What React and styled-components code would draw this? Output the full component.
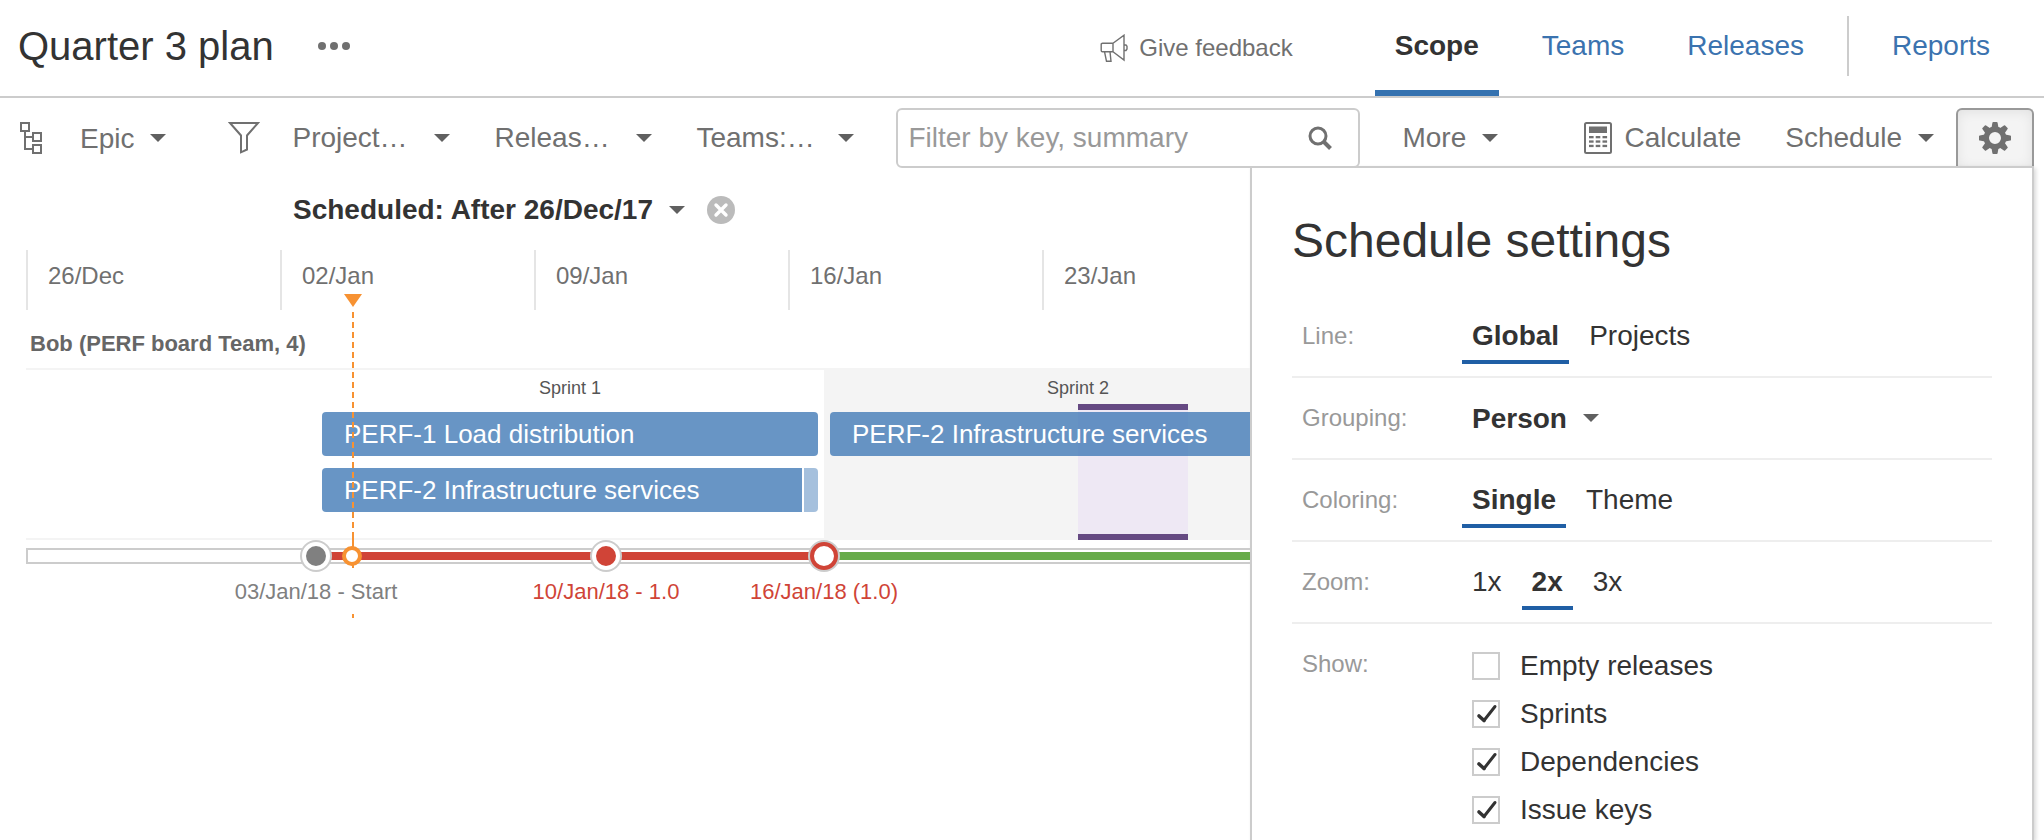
import React from "react";
import styled, { createGlobalStyle, css } from 'styled-components'


const GlobalStyle = createGlobalStyle`
    * {
        box-sizing: border-box;
    }
    body {
        margin: 0;
        background: #fff;
        color: #333;
        font-family: "Liberation Sans", Arial, sans-serif;
    }
    button, input, select {
        margin: 0;
        padding: 0;
        border: 0;
        background: none;
        color: inherit;
        font: inherit;
    }
`

const tabs = [
    { name: 'Scope', active: true },
    { name: 'Teams' },
    { name: 'Releases' },
]

const filters = ['Project…', 'Releas…', 'Teams:…']

const weeks = ['26/Dec', '02/Jan', '09/Jan', '16/Jan', '23/Jan']

// offsets and widths are in timeline pixels, counted from 26/Dec
const sprints = [
    { name: 'Sprint 1', start: 290, width: 508 },
    { name: 'Sprint 2', start: 798, width: 508, shaded: true },
]

const rows = [
    [
        { text: 'PERF-1 Load distribution', start: 296, width: 496 },
        { text: 'PERF-2 Infrastructure services', start: 804, width: 496 },
    ],
    [
        { text: 'PERF-2 Infrastructure services', start: 296, width: 480, continued: true },
        { text: '', start: 778, width: 14, tail: true },
    ],
]

const timeOff = { start: 1052, width: 110 }

const today = 326

const milestones = [
    { label: '03/Jan/18 - Start', at: 290, kind: 'start' },
    { label: '10/Jan/18 - 1.0', at: 580, kind: 'due' },
    { label: '16/Jan/18 (1.0)', at: 798, kind: 'release' },
]

const checks = [
    { name: 'Empty releases', checked: false },
    { name: 'Sprints', checked: true },
    { name: 'Dependencies', checked: true },
    { name: 'Issue keys', checked: true },
]


const TreeIcon = () => (
    <svg width="22" height="32" viewBox="0 0 22 32" fill="none" stroke="#707070" strokeWidth="2">
        <path d="M1 1h8v8H1zM13 11h8v8h-8zM13 23h8v8h-8zM5 9v18h8M5 15h8" />
    </svg>
)

const FunnelIcon = () => (
    <svg width="32" height="32" viewBox="0 0 32 32" fill="none" stroke="#707070" strokeWidth="2">
        <path d="M2 1H30L19 13.500V27.500L13 30.300V13.500Z" />
    </svg>
)

const MegaphoneIcon = () => (
    <svg width="28" height="28" viewBox="0 0 28 28" fill="none" stroke="#707070" strokeWidth="1.4">
        <path d="M13 9.300H2.500Q1.200 9.300 1.200 10.500V16.500Q1.200 17.700 2.500 17.700H13ZM13 9.300L24 1.200V26L13 17.700M4.500 17.700L6.500 27.300H11L10 17.700M24 11H26L27 12.300V15L26 16.500H24" />
    </svg>
)

const SearchIcon = () => (
    <svg width="24" height="24" viewBox="0 0 24 24" fill="none" stroke="#707070" strokeWidth="3">
        <circle cx="10" cy="10" r="8" />
        <path d="M15.500 15.500L22.500 22.500" strokeWidth="4" />
    </svg>
)

const CalculatorIcon = () => (
    <svg width="28" height="32" viewBox="0 0 28 32" fill="#707070">
        <rect x="1" y="1" width="26" height="30" rx="1.5" fill="none" stroke="#707070" strokeWidth="2" />
        <rect x="5" y="4.500" width="18" height="6.500" />
        {[14, 18.4, 22.8].map(y => [5, 11.7, 18.5].map(x => (
            <rect key={`${x}-${y}`} x={x} y={y} width="4.600" height="2.300" />
        )))}
    </svg>
)

const GearIcon = () => (
    <svg width="32" height="32" viewBox="0 0 32 32" fill="#707070">
        <circle cx="16" cy="16" r="8.7" fill="none" stroke="#707070" strokeWidth="5.4" />
        {[0, 45, 90, 135, 180, 225, 270, 315].map(angle => (
            <path key={angle} d="M12.300 7L13.400 0.800Q13.500 0 14.300 0H17.700Q18.500 0 18.600 0.800L19.700 7Z"
                transform={`rotate(${angle} 16 16)`} />
        ))}
    </svg>
)

const ClearIcon = () => (
    <svg width="28" height="28" viewBox="0 0 28 28">
        <circle cx="14" cy="14" r="14" fill="#bbb" />
        <path d="M9 9L19 19M19 9L9 19" stroke="#fff" strokeWidth="3.400" strokeLinecap="round" />
    </svg>
)

const TickIcon = () => (
    <svg width="28" height="28" viewBox="0 0 28 28" fill="none" stroke="#333" strokeLinecap="round">
        <path d="M7 16L12 20.500" strokeWidth="3.600" />
        <path d="M12 20.500L23 6.500" strokeWidth="3" />
    </svg>
)


const Header = () => (
    <StyledHeader>
        <Title>Quarter 3 plan</Title>
        <DotsButton aria-label="More plan actions">
            <Dot /><Dot /><Dot />
        </DotsButton>
        <Feedback href="#feedback">
            <MegaphoneIcon />
            Give feedback
        </Feedback>
        <Tabs>
            {tabs.map(({ name, active }) => (
                <Tab key={name} href={`#${name}`} $active={active}>{name}</Tab>
            ))}
            <TabDivider />
            <Tab href="#Reports">Reports</Tab>
        </Tabs>
    </StyledHeader>
)

const Toolbar = () => (
    <StyledToolbar>
        <HierarchyPicker>
            <TreeIcon />
            <SelectWrap>
                <StyledSelect aria-label="Hierarchy level" defaultValue="Epic">
                    <option>Epic</option>
                </StyledSelect>
                <Caret />
            </SelectWrap>
        </HierarchyPicker>
        <Filters>
            <FunnelIcon />
            {filters.map(name => (
                <FilterButton key={name} aria-haspopup="true">
                    {name}
                    <Caret />
                </FilterButton>
            ))}
        </Filters>
        <Search>
            <SearchInput type="text" placeholder="Filter by key, summary" aria-label="Filter by key, summary" />
            <SearchIcon />
        </Search>
        <MenuButton aria-haspopup="true">More <Caret /></MenuButton>
        <Actions>
            <CalculateButton><CalculatorIcon />Calculate</CalculateButton>
            <MenuButton aria-haspopup="true">Schedule <Caret /></MenuButton>
        </Actions>
        <GearButton aria-label="Schedule settings" aria-pressed="true">
            <GearIcon />
        </GearButton>
    </StyledToolbar>
)

const Timeline = () => (
    <StyledTimeline>
        <Axis>
            {weeks.map(week => <Week key={week}>{week}</Week>)}
        </Axis>
        <LaneTitle>Bob (PERF board Team, 4)</LaneTitle>
        <Lane>
            {sprints.map(({ name, start, width, shaded }) => (
                <Sprint key={name} $shaded={shaded} style={{ left: start, width }}>{name}</Sprint>
            ))}
            <TimeOff style={{ left: timeOff.start, width: timeOff.width }} />
            {rows.map((bars, i) => (
                <BarRow key={i}>
                    {bars.map(({ text, start, width, continued, tail }) => (
                        <Bar key={start} $continued={continued} $tail={tail}
                            style={{ left: start, width }}>
                            {text}
                        </Bar>
                    ))}
                </BarRow>
            ))}
        </Lane>
        <TodayLine style={{ left: today }} />
        <Track>
            <Segment style={{ width: milestones[0].at - 4 }} />
            <Segment $color="#d04437" style={{ width: milestones[2].at - milestones[0].at }} />
            <Segment $color="#67ab49" $grow />
            {milestones.map(({ at, kind }) => (
                <Milestone key={at} $kind={kind} style={{ left: at - 2 }} />
            ))}
            <TodayRing style={{ left: today - 2 }} />
        </Track>
        <MilestoneLabels>
            {milestones.map(({ label, at, kind }) => (
                <MilestoneLabel key={at} $kind={kind} style={{ left: at }}>{label}</MilestoneLabel>
            ))}
        </MilestoneLabels>
    </StyledTimeline>
)

const Options = ({ label, options, selected }) => (
    <Setting>
        <SettingLabel>{label}</SettingLabel>
        <OptionGroup role="group" aria-label={label}>
            {options.map(option => (
                <Option key={option} aria-pressed={option === selected} $active={option === selected}>
                    {option}
                </Option>
            ))}
        </OptionGroup>
    </Setting>
)

const SettingsPanel = () => (
    <Panel>
        <PanelTitle>Schedule settings</PanelTitle>
        <Options label="Line:" options={['Global', 'Projects']} selected="Global" />
        <Setting>
            <SettingLabel as="label" htmlFor="grouping">Grouping:</SettingLabel>
            <GroupingWrap>
                <StyledSelect id="grouping" $bold defaultValue="Person">
                    <option>Person</option>
                </StyledSelect>
                <Caret />
            </GroupingWrap>
        </Setting>
        <Options label="Coloring:" options={['Single', 'Theme']} selected="Single" />
        <Options label="Zoom:" options={['1x', '2x', '3x']} selected="2x" />
        <Setting $last>
            <SettingLabel>Show:</SettingLabel>
            <CheckList>
                {checks.map(({ name, checked }) => (
                    <CheckLabel key={name}>
                        <CheckBox>
                            <CheckInput type="checkbox" defaultChecked={checked} />
                            <TickIcon />
                        </CheckBox>
                        {name}
                    </CheckLabel>
                ))}
            </CheckList>
        </Setting>
    </Panel>
)

const App = () => (
    <Page>
        <GlobalStyle />
        <Header />
        <Toolbar />
        <Main>
            <Schedule>
                <ScheduledFilter>
                    <ScheduledButton aria-haspopup="true">
                        Scheduled: After 26/Dec/17
                        <Caret />
                    </ScheduledButton>
                    <ClearButton aria-label="Remove filter"><ClearIcon /></ClearButton>
                </ScheduledFilter>
                <Timeline />
            </Schedule>
            <SettingsPanel />
        </Main>
    </Page>
)

export default App


const Page = styled.div`
    display: flex;
    flex-direction: column;
    height: 100vh;
    overflow: hidden;
`

const Row = styled.div`
    display: flex;
    align-items: center;
`

const Caret = styled.span`
    flex: none;
    border: 8px solid transparent;
    border-top-color: #606060;
    border-bottom: 0;
    pointer-events: none;
`

const StyledHeader = styled.header`
    display: flex;
    flex: none;
    height: 98px;
    padding: 0 34px 0 18px;
    border-bottom: 2px solid #ccc;
`

const Title = styled.h1`
    margin: 0;
    font-size: 40px;
    font-weight: 400;
    line-height: 92px;
    white-space: nowrap;
`

const DotsButton = styled.button`
    display: flex;
    align-items: center;
    gap: 4px;
    height: 92px;
    margin-left: 44px;
`

const Dot = styled.span`
    width: 8px;
    height: 8px;
    border-radius: 50%;
    background: #707070;
`

const Feedback = styled.a`
    display: flex;
    align-items: center;
    gap: 11px;
    height: 96px;
    margin-left: auto;
    color: #707070;
    font-size: 24px;
    text-decoration: none;
    white-space: nowrap;
`

const Tabs = styled.nav`
    display: flex;
    gap: 23px;
    margin-left: 82px;
`

const Tab = styled.a`
    height: 96px;
    padding: 2px 20px 0;
    border-bottom: 6px solid ${props => props.$active ? '#3572b0' : 'transparent'};
    color: ${props => props.$active ? '#333' : '#3b73af'};
    font-size: 28px;
    font-weight: ${props => props.$active ? 700 : 400};
    line-height: 88px;
    text-decoration: none;
`

const TabDivider = styled.span`
    width: 2px;
    height: 60px;
    margin-top: 16px;
    background: #ccc;
`

const StyledToolbar = styled.div`
    display: flex;
    flex: none;
    height: 68px;
    padding: 10px 10px 0 20px;
    color: #707070;
    font-size: 28px;
`

const HierarchyPicker = styled(Row)`
    gap: 38px;
    height: 60px;
`

const SelectWrap = styled(Row)`
    gap: 16px;
`

const StyledSelect = styled.select`
    appearance: none;
    field-sizing: content;
    outline: none;
    font-weight: ${props => props.$bold ? 700 : 400};
`

const Filters = styled(Row)`
    height: 60px;
    margin-left: 62px;
    & > svg {
        margin-right: 32px;
    }
`

const FilterButton = styled.button`
    display: flex;
    align-items: center;
    justify-content: space-between;
    width: 158px;
    margin-right: 44px;
`

const Search = styled(Row)`
    position: relative;
    z-index: 1;
    flex: 0 1 464px;
    height: 60px;
    margin-left: -2px;
    padding: 0 26px 0 10px;
    border: 2px solid #ccc;
    border-radius: 6px;
    background: #fff;
`

const SearchInput = styled.input`
    flex: 1;
    min-width: 0;
    outline: none;
    &::placeholder {
        color: #999;
        opacity: 1;
    }
`

const MenuButton = styled.button`
    display: flex;
    align-items: center;
    gap: 16px;
    height: 60px;
    ${Search} + & {
        margin-left: 42px;
    }
`

const Actions = styled(Row)`
    gap: 44px;
    height: 60px;
    margin: 0 22px 0 auto;
`

const CalculateButton = styled.button`
    display: flex;
    align-items: center;
    gap: 13px;
`

const GearButton = styled.button`
    display: flex;
    align-items: center;
    justify-content: center;
    width: 78px;
    height: 58px;
    border: 2px solid #999;
    border-bottom: 0;
    border-radius: 6px 6px 0 0;
    background: #f4f4f4;
    box-shadow: inset 0 2px 12px rgba(0, 0, 0, 0.08);
`

const Main = styled.main`
    display: flex;
    flex: 1;
    min-height: 0;
    padding-right: 10px;
`

const Schedule = styled.section`
    flex: 1;
    min-width: 0;
    padding-left: 26px;
    overflow: hidden;
`

const ScheduledFilter = styled(Row)`
    gap: 22px;
    height: 84px;
    padding: 4px 0 0 267px;
`

const ScheduledButton = styled.button`
    display: flex;
    align-items: center;
    gap: 16px;
    font-size: 28px;
    font-weight: 700;
    white-space: nowrap;
`

const ClearButton = styled.button`
    height: 28px;
`

const StyledTimeline = styled.div`
    position: relative;
`

const Axis = styled.div`
    display: grid;
    grid-template-columns: repeat(5, 254px);
`

const Week = styled.div`
    height: 60px;
    padding-left: 20px;
    border-left: 2px solid #e5e5e5;
    color: #707070;
    font-size: 24px;
    line-height: 52px;
`

const LaneTitle = styled.h2`
    margin: 0;
    padding: 10px 0 0 4px;
    color: #666;
    font-size: 22px;
    font-weight: 700;
    line-height: 48px;
`

const Lane = styled.div`
    position: relative;
    display: grid;
    gap: 12px;
    padding: 42px 0 26px;
    border: solid #f4f4f4;
    border-width: 2px 0;
`

const Sprint = styled.div`
    position: absolute;
    top: 0;
    bottom: 0;
    background: ${props => props.$shaded ? '#f4f4f4' : '#fff'};
    color: #555;
    font-size: 18px;
    line-height: 36px;
    text-align: center;
`

const TimeOff = styled.div`
    position: absolute;
    top: 34px;
    bottom: -2px;
    border: solid #654982;
    border-width: 6px 0;
    background: #eee8f4;
`

const BarRow = styled.div`
    position: relative;
    height: 44px;
`

const Bar = styled.div`
    position: absolute;
    height: 44px;
    padding-left: ${props => props.$tail ? 0 : 22}px;
    border-radius: ${props => props.$tail ? '0 4px 4px 0' : props.$continued ? '4px 0 0 4px' : '4px'};
    background: rgba(59, 117, 180, ${props => props.$tail ? 0.46 : 0.77});
    color: #fff;
    font-size: 26px;
    line-height: 44px;
    white-space: nowrap;
`

const TodayLine = styled.div`
    position: absolute;
    top: 60px;
    width: 2px;
    height: 310px;
    background: repeating-linear-gradient(#f79232 0 6px, transparent 6px 10px) 0 2px;
    &::before {
        content: "";
        position: absolute;
        top: -16px;
        left: -8px;
        border: 9px solid transparent;
        border-top: 13px solid #f79232;
        border-bottom: 0;
    }
`

const Track = styled.div`
    position: relative;
    z-index: 1;
    display: flex;
    height: 16px;
    margin-top: 8px;
    padding: 2px 0 2px 2px;
    border: 2px solid #ccc;
    border-right: 0;
`

const Segment = styled.div`
    flex: ${props => props.$grow ? 1 : 'none'};
    background: ${props => props.$color || '#fff'};
`

const markerFill = {
    start: css`background: #808080; border-color: #fff;`,
    due: css`background: #d04437; border-color: #fff;`,
    release: css`background: #fff; border-color: #d04437;`,
}

const Milestone = styled.span`
    position: absolute;
    top: 50%;
    width: 28px;
    height: 28px;
    border: 4px solid;
    border-radius: 50%;
    box-shadow: 0 0 0 2px #ccc;
    transform: translate(-50%, -50%);
    ${props => markerFill[props.$kind]}
`

const TodayRing = styled.span`
    position: absolute;
    top: 50%;
    width: 20px;
    height: 20px;
    border: 4px solid #f79232;
    border-radius: 50%;
    background: #fff;
    transform: translate(-50%, -50%);
    &::before {
        content: "";
        position: absolute;
        bottom: 14px;
        left: 6px;
        width: 2px;
        height: 16px;
        background: #f79232;
    }
`

const MilestoneLabels = styled.div`
    position: relative;
    height: 56px;
`

const MilestoneLabel = styled.span`
    position: absolute;
    top: 6px;
    background: #fff;
    color: ${props => props.$kind === 'start' ? '#808080' : '#d04437'};
    font-size: 22px;
    line-height: 44px;
    white-space: nowrap;
    transform: translateX(-50%);
`

const Panel = styled.aside`
    flex: none;
    width: 784px;
    padding: 0 40px;
    border: 2px solid #ccc;
    border-bottom: 0;
    background: #fff;
    box-shadow: 2px 2px 4px rgba(0, 0, 0, 0.15);
    overflow: hidden;
`

const PanelTitle = styled.h2`
    margin: 40px 0 22px;
    font-size: 48px;
    font-weight: 400;
    line-height: 66px;
`

const Setting = styled.div`
    display: grid;
    grid-template-columns: 170px 1fr;
    padding: 16px 0 12px;
    border-bottom: ${props => props.$last ? 0 : 2}px solid #eee;
    font-size: 28px;
`

const SettingLabel = styled.span`
    padding-left: 10px;
    color: #999;
    font-size: 24px;
    line-height: 48px;
`

const OptionGroup = styled.div`
    display: flex;
    gap: 10px;
`

const Option = styled.button`
    height: 52px;
    padding: 0 10px;
    border-bottom: 4px solid ${props => props.$active ? '#205fa5' : 'transparent'};
    font-weight: ${props => props.$active ? 700 : 400};
    line-height: 48px;
`

const GroupingWrap = styled(SelectWrap)`
    height: 52px;
    padding: 0 0 4px 10px;
`

const CheckList = styled.div`
    padding: 2px 0 0 10px;
`

const CheckLabel = styled.label`
    display: flex;
    align-items: center;
    gap: 20px;
    height: 48px;
`

const CheckBox = styled.span`
    display: grid;
    & > * {
        grid-area: 1 / 1;
    }
`

const CheckInput = styled.input`
    appearance: none;
    width: 28px;
    height: 28px;
    border: 2px solid #ccc;
    background: #fff;
    & + svg {
        visibility: hidden;
        pointer-events: none;
    }
    &:checked + svg {
        visibility: visible;
    }
`
